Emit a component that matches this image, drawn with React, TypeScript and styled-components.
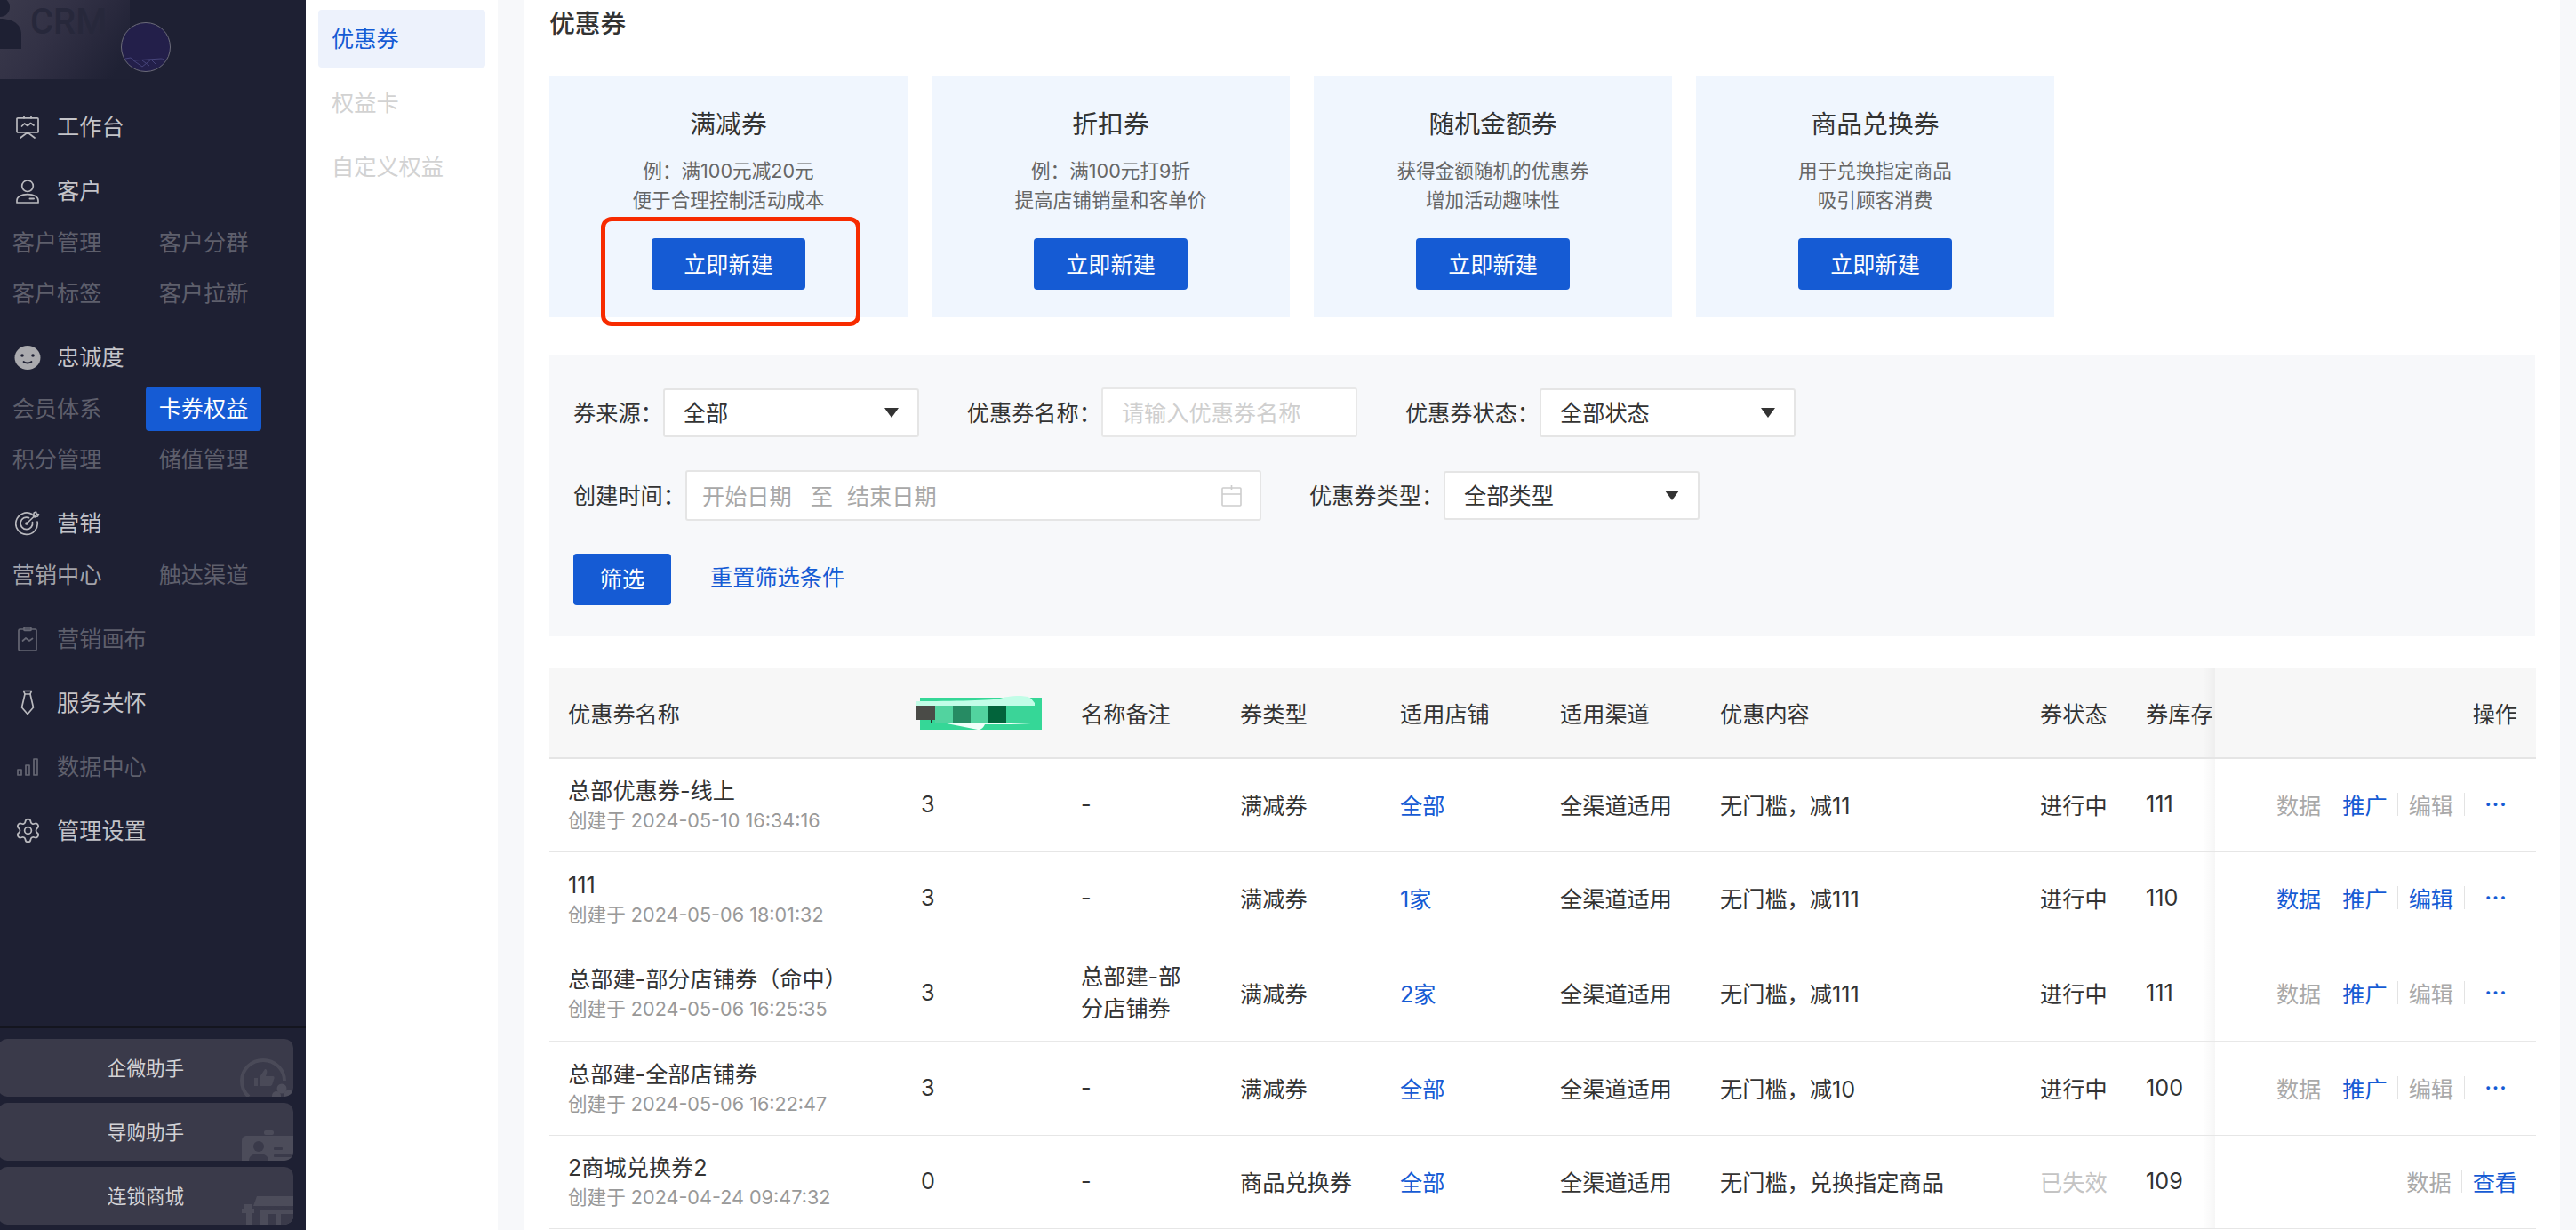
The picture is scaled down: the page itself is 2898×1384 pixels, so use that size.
import React from "react";
import styled, { createGlobalStyle } from "styled-components";
import { Settings } from "lucide-react";

const BLUE = "#155bd4";
const SIDE = "#1e2033";

const Global = createGlobalStyle`
  html, body { margin: 0; padding: 0; height: 100%; background: #f7f8fa; }
  #root { height: 100%; }
  * { box-sizing: border-box; }
  body { font-family: "Inter", "Noto Sans CJK SC", sans-serif; color: #333; }
`;

const Page = styled.div`
  display: flex;
  height: 1384px;
  overflow: hidden;
  background: #f7f8fa;
`;

/* ---------- dark sidebar ---------- */
const Sidebar = styled.aside`
  width: 344px;
  flex: none;
  height: 100%;
  background: ${SIDE};
  display: flex;
  flex-direction: column;
`;
const LogoBar = styled.div`
  position: relative;
  height: 89px;
  margin-bottom: 18px;
`;
const LogoBlock = styled.div`
  width: 146px;
  height: 89px;
  background: linear-gradient(125deg, #3b3a4c 0%, #323145 40%, #29293d 65%, #1f2134 90%);
  display: flex;
  align-items: flex-start;
  gap: 10px;
  overflow: hidden;
`;
const LogoWord = styled.span`
  font-family: "Roboto", sans-serif;
  font-size: 40px;
  line-height: 50px;
  font-weight: 500;
  color: #27283b;
`;
const Avatar = styled.svg`
  position: absolute;
  left: 136px;
  top: 25px;
`;
const Menu = styled.nav`
  display: flex;
  flex-direction: column;
`;
const MainRow = styled.div<{ $dim?: boolean }>`
  height: 72px;
  display: flex;
  align-items: center;
  font-size: 25.2px;
  color: ${(p) => (p.$dim ? "#5e5f6c" : "#c4c4c9")};
`;
const MainLabel = styled.span`
  margin-top: -4px;
`;
const IconSlot = styled.span<{ $dim?: boolean }>`
  width: 64px;
  flex: none;
  display: flex;
  justify-content: center;
  padding-right: 2px;
  color: ${(p) => (p.$dim ? "#666774" : "#b9b9be")};
`;
const SubGrid = styled.div`
  display: grid;
  grid-template-columns: 130px 130px;
  column-gap: 35px;
  margin: -7px 0 7px -1px;
`;
const SubItem = styled.div<{ $active?: boolean; $bright?: boolean }>`
  height: 57.5px;
  padding-bottom: 4px;
  display: flex;
  align-items: center;
  justify-content: center;
  font-size: 25.2px;
  color: ${(p) => (p.$bright ? "#a3a3aa" : "#5e5f6c")};
  ${(p) =>
    p.$active &&
    `
    color: #fff;
    position: relative;
    z-index: 0;
    &::before {
      content: "";
      position: absolute;
      left: 0; right: 0; top: 3.5px; bottom: 3.5px;
      background: ${BLUE};
      border-radius: 4px;
      z-index: -1;
    }
  `}
`;
const Footer = styled.div`
  margin-top: auto;
  border-top: 2px solid #14151f;
  padding: 12px 0 6px;
  display: flex;
  flex-direction: column;
  gap: 7px;
`;
const HelperButton = styled.div`
  position: relative;
  overflow: hidden;
  width: 332px;
  height: 65px;
  margin-left: -2px;
  padding-bottom: 2px;
  border-radius: 10px;
  background: #3a3a4a;
  color: #d2d2d6;
  font-size: 21.6px;
  display: flex;
  align-items: center;
  justify-content: center;
`;
const HelperArt = styled.svg`
  position: absolute;
  right: 0;
  bottom: 0;
`;

/* ---------- secondary nav ---------- */
const SubNav = styled.div`
  width: 216px;
  flex: none;
  background: #fff;
  padding: 11px 14px 0;
  display: flex;
  flex-direction: column;
  gap: 7px;
`;
const SubNavItem = styled.div<{ $active?: boolean }>`
  height: 65px;
  padding: 0 0 3px 15px;
  display: flex;
  align-items: center;
  font-size: 25.2px;
  border-radius: 4px;
  color: ${(p) => (p.$active ? BLUE : "#d2d2d2")};
  background: ${(p) => (p.$active ? "#edf2fc" : "transparent")};
`;

/* ---------- content ---------- */
const Content = styled.main`
  width: 2291px;
  margin-left: 29px;
  flex: none;
  background: #fff;
  padding: 0 28px 0 29px;
`;
const Title = styled.h1`
  margin: 0 0 35px;
  height: 50px;
  line-height: 54px;
  font-size: 28.8px;
  font-weight: 500;
  color: #333;
`;
const Cards = styled.div`
  display: flex;
  gap: 27px;
`;
const Card = styled.div`
  position: relative;
  width: 403px;
  height: 272px;
  background: #f0f6fe;
  padding-top: 35px;
  display: flex;
  flex-direction: column;
  align-items: center;
`;
const CardTitle = styled.div`
  font-size: 28.8px;
  line-height: 40px;
  color: #333;
`;
const CardDesc = styled.div`
  margin-top: 16px;
  font-size: 21.6px;
  line-height: 33px;
  color: #666;
  text-align: center;
`;
const PrimaryButton = styled.button<{ $w: number }>`
  width: ${(p) => p.$w}px;
  height: 58px;
  border: 0;
  border-radius: 4px;
  background: ${BLUE};
  color: #fff;
  font: inherit;
  font-size: 25.2px;
  padding: 0 0 3px;
`;
const CardAction = styled.div`
  margin-top: 26px;
`;
const Highlight = styled.div`
  position: absolute;
  left: 58px;
  top: 159px;
  width: 292px;
  height: 123px;
  border: 5px solid #f72b00;
  border-radius: 12px;
`;
const Filter = styled.section`
  margin-top: 42px;
  height: 317px;
  background: #f7f8fa;
  padding: 37px 27px 0;
  display: flex;
  flex-direction: column;
  gap: 37px;
`;
const FilterRow = styled.div`
  display: flex;
  align-items: center;
  gap: 54px;
  height: 56px;
`;
const Field = styled.div`
  display: flex;
  align-items: center;
`;
const Label = styled.span`
  font-size: 25.2px;
  color: #333;
  white-space: nowrap;
  margin-top: -3px;
`;
const SelectBox = styled.div<{ $w: number }>`
  width: ${(p) => p.$w}px;
  height: 55px;
  background: #fff;
  border: 2px solid #e5e5e5;
  border-radius: 3px;
  padding: 0 21px 3px 21px;
  display: flex;
  align-items: center;
  justify-content: space-between;
  font-size: 25.2px;
  color: #333;
`;
const Caret = styled.i`
  width: 0;
  height: 0;
  margin-top: 3px;
  border-left: 8px solid transparent;
  border-right: 8px solid transparent;
  border-top: 11px solid #333;
`;
const TextInput = styled.div`
  width: 288px;
  height: 56px;
  background: #fff;
  border: 2px solid #e8e8e8;
  border-radius: 3px;
  padding: 0 0 2px 21px;
  display: flex;
  align-items: center;
  font-size: 25.2px;
  color: #cfcfcf;
`;
const DateBox = styled.div`
  width: 648px;
  height: 57px;
  background: #fff;
  border: 2px solid #e5e5e5;
  border-radius: 3px;
  padding: 0 20px 0 17px;
  display: flex;
  align-items: center;
  font-size: 25.2px;
  color: #a8a8a8;
`;
const DateTo = styled.span`
  margin: 0 16px 0 21px;
`;
const CalIcon = styled.svg`
  margin-left: auto;
`;
const ActionsRow = styled.div`
  display: flex;
  align-items: center;
  height: 57px;
  margin-top: 1px;
  gap: 44px;
`;
const ResetLink = styled.a`
  font-size: 25.2px;
  color: ${BLUE};
  margin-top: -7px;
`;

const Table = styled.table`
  margin-top: 35.5px;
  width: 2235px;
  table-layout: fixed;
  border-collapse: separate;
  border-spacing: 0;
  font-size: 25.2px;
  color: #333;
`;
const HeadCell = styled.th<{ $right?: boolean }>`
  height: 102.5px;
  background: #f7f7f7;
  border-bottom: 2px solid #e5e5e5;
  font-weight: 400;
  padding: 0 ${(p) => (p.$right ? "21px" : "0")} 0 ${(p) => (p.$right ? "0" : "21px")};
  text-align: ${(p) => (p.$right ? "right" : "left")};
  position: relative;
  white-space: nowrap;
`;
const Row = styled.tr<{ $h: number }>`
  height: ${(p) => p.$h}px;
`;
const Cell = styled.td<{ $thick?: boolean }>`
  border-bottom: ${(p) => (p.$thick ? "2px solid #e8e8e8" : "1px solid #e6e6e6")};
  padding: 0 0 3px 21px;
  vertical-align: middle;
`;
const NameCell = styled(Cell)`
  padding: 3px 0 0 21px;
`;
const FixedCell = styled(Cell)`
  padding: 0 21px 3px 0;
  position: relative;
`;
const FixedShadow = styled.span`
  position: absolute;
  left: -14px;
  top: 0;
  bottom: 0;
  width: 14px;
  background: linear-gradient(to left, rgba(0, 0, 0, 0.035), rgba(0, 0, 0, 0));
  pointer-events: none;
`;
const NameTitle = styled.div`
  line-height: 32px;
`;
const NameSub = styled.div`
  line-height: 35px;
  font-size: 21.6px;
  color: #999;
`;
const Note = styled.div`
  max-width: 120px;
  line-height: 36px;
`;
const Link = styled.span`
  color: ${BLUE};
`;
const Expired = styled.span`
  color: #c4c4c4;
`;
const ActionList = styled.div`
  display: flex;
  justify-content: flex-end;
  align-items: center;
`;
const Action = styled.span<{ $on?: boolean }>`
  color: ${(p) => (p.$on ? BLUE : "#a9a9a9")};
  white-space: nowrap;
`;
const Sep = styled.i`
  width: 1px;
  height: 26px;
  margin: 0 11.5px;
  background: #e3e3e3;
`;
const More = styled.span`
  width: 48px;
  text-align: center;
  color: ${BLUE};
  font-weight: 700;
  font-size: 22px;
  line-height: 26px;
  letter-spacing: 1px;
`;

/* ---------- drawings ---------- */
const Line = { fill: "none", stroke: "currentColor", strokeWidth: 1.7, strokeLinecap: "round", strokeLinejoin: "round" } as const;

const MonitorIcon = () => (
  <svg width="26" height="26" viewBox="0 0 26 26" {...Line}>
    <path d="M9 .8v2M17 .8v2" />
    <rect x="1" y="2.8" width="24" height="16.2" rx="1" />
    <path d="M6.5 12l3-3 3.5 2.5 3.5-3 3.5 2.5" />
    <path d="M13 19l-8 6M13 19l8 6" />
  </svg>
);
const PersonIcon = () => (
  <svg width="26" height="27" viewBox="0 0 26 27" {...Line}>
    <circle cx="13" cy="7.2" r="6.3" />
    <path d="M1 26v-2.5c0-4 5-6.8 12-6.8s12 2.8 12 6.8V26z" />
    <path d="M15.5 21.6h4.5" strokeWidth="2" />
  </svg>
);
const SmileIcon = () => (
  <svg width="30" height="27" viewBox="0 0 30 27">
    <ellipse cx="15" cy="13.5" rx="14.5" ry="13.5" fill="#aaaaae" />
    <circle cx="9" cy="11" r="1.8" fill={SIDE} />
    <circle cx="21" cy="11" r="1.8" fill={SIDE} />
    <path d="M10.5 18c2.5 2 6.5 2 9 0" fill="none" stroke={SIDE} strokeWidth="1.8" strokeLinecap="round" />
  </svg>
);
const TargetIcon = () => (
  <svg width="28" height="28" viewBox="0 0 28 28" {...Line}>
    <path d="M19 3.6A12.2 12.2 0 1 0 25 12" />
    <path d="M15.5 7.6A6.8 6.8 0 1 0 19.5 12.5" />
    <circle cx="13" cy="14" r="1" fill="currentColor" />
    <path d="M13 14L22.5 5" />
    <path d="M20.5 5.5l.8-3.5 2.2-1 .6 2.2 2.4.6-1.2 2.2-3.3.8z" />
  </svg>
);
const ClipIcon = () => (
  <svg width="22" height="28" viewBox="0 0 22 28" {...Line}>
    <rect x="1" y="3" width="20" height="24" rx="1.5" />
    <rect x="7" y="1" width="8" height="3.5" rx="1" />
    <path d="M5.5 16l3.5-3 4 3 3.5-2.5" />
  </svg>
);
const TieIcon = () => (
  <svg width="16" height="29" viewBox="0 0 16 29" {...Line}>
    <path d="M3.5 1.5h9l-1.5 3.5H5z" />
    <path d="M5 5L1.5 20 8 27.5 14.5 20 11 5" />
  </svg>
);
const BarsIcon = () => (
  <svg width="24" height="20" viewBox="0 0 24 20" {...Line}>
    <rect x="1" y="13" width="4" height="6" />
    <rect x="10" y="8" width="4" height="11" />
    <rect x="19" y="1" width="4" height="18" />
  </svg>
);
const GearIcon = () => <Settings size={31} strokeWidth={1.35} />;

const ChatArt = () => (
  <HelperArt width="60" height="45" viewBox="0 0 60 45">
    <path d="M10 45c-6-5-8-12-8-18C2 14 13 4 26 4s24 10 24 23" fill="none" stroke="#4a4a58" strokeWidth="4" />
    <path d="M16 33v-9h4v9zM22 33V23l6-9c2 0 3 2 2 5l-1 3h8c2 0 2 2 1 4l-2 6c-1 1-2 1-3 1z" fill="#4a4a58" />
    <circle cx="47" cy="36" r="5.5" fill="#4e4e5c" />
    <circle cx="55" cy="43" r="5.5" fill="#4e4e5c" />
    <circle cx="41" cy="44" r="5" fill="#4e4e5c" />
  </HelperArt>
);
const BadgeArt = () => (
  <HelperArt width="58" height="34" viewBox="0 0 58 34">
    <rect x="25" y="0" width="11" height="5" rx="2" fill="#4c4c5a" />
    <path d="M6 6h52v28H0V12c0-4 2-6 6-6z" fill="#4c4c5a" />
    <circle cx="19" cy="18" r="6" fill="#3a3a4a" />
    <path d="M8 34c0-5 4-8 11-8s11 3 11 8z" fill="#3a3a4a" />
    <rect x="36" y="19" width="10" height="3" rx="1" fill="#3a3a4a" />
    <rect x="36" y="27" width="20" height="3" rx="1" fill="#3a3a4a" />
  </HelperArt>
);
const StoreArt = () => (
  <HelperArt width="58" height="32" viewBox="0 0 58 32">
    <path d="M17 0h41v11H13z" fill="#4c4c5a" />
    <path d="M14 11c3 3 6 3 8 0 2 3 6 3 8 0 2 3 6 3 8 0 2 3 6 3 8 0 2 3 6 3 12 0v3c-6 2-10 2-12 1-2 1-6 1-8 0-2 1-6 1-8 0-2 1-6 1-8 0-2 1-6 1-8-1z" fill="#3a3a4a" />
    <path d="M20 16h38v16H20z" fill="#4c4c5a" />
    <path d="M29 20h10v12H29zM44 20h14v12H44z" fill="#3a3a4a" />
    <path d="M3 9h8v5h3v5H11v13H5V19H0v-5h3z" fill="#4c4c5a" />
  </HelperArt>
);
const GreenMask = () => (
  <svg width="144" height="40" viewBox="0 0 144 40" style={{ display: "block", marginLeft: "-6px" }}>
    <rect x="5" y="3" width="137" height="36" fill="#35d797" />
    <path d="M0 7c40 0 90-1 95-3 8-3 30-5 35 0l4 5v3H0z" fill="#c2fde7" />
    <rect x="0" y="12" width="22" height="16" fill="#4a4b47" />
    <rect x="22" y="12" width="20" height="20" fill="#52d39f" />
    <rect x="42" y="12" width="20" height="20" fill="#268b63" />
    <rect x="62" y="12" width="20" height="20" fill="#52d39f" />
    <rect x="82" y="12" width="20" height="20" fill="#02643b" />
    <rect x="102" y="12" width="27" height="20" fill="#3bd498" />
    <path d="M35 32l35 7c4 0 6-2 8-6 20 0 40 0 52-1z" fill="#effff9" />
    <rect x="17" y="28" width="2" height="4" fill="#26302c" />
  </svg>
);

/* ---------- data ---------- */
const cards = [
  { t: "满减券", a: "例：满100元减20元", b: "便于合理控制活动成本", mark: true },
  { t: "折扣券", a: "例：满100元打9折", b: "提高店铺销量和客单价" },
  { t: "随机金额券", a: "获得金额随机的优惠券", b: "增加活动趣味性" },
  { t: "商品兑换券", a: "用于兑换指定商品", b: "吸引顾客消费" },
];

type Act = { label: string; on?: boolean };
const rows: {
  name: string; sub: string; count: string; note: string; type: string; shop: string; content: string;
  status: string; expired?: boolean; stock: string; h: number; thick?: boolean; acts: Act[]; more?: boolean;
}[] = [
  { name: "总部优惠券-线上", sub: "创建于 2024-05-10 16:34:16", count: "3", note: "-", type: "满减券", shop: "全部", content: "无门槛，减11", status: "进行中", stock: "111", h: 105,
    acts: [{ label: "数据" }, { label: "推广", on: true }, { label: "编辑" }], more: true },
  { name: "111", sub: "创建于 2024-05-06 18:01:32", count: "3", note: "-", type: "满减券", shop: "1家", content: "无门槛，减111", status: "进行中", stock: "110", h: 106,
    acts: [{ label: "数据", on: true }, { label: "推广", on: true }, { label: "编辑", on: true }], more: true },
  { name: "总部建-部分店铺券（命中）", sub: "创建于 2024-05-06 16:25:35", count: "3", note: "总部建-部分店铺券", type: "满减券", shop: "2家", content: "无门槛，减111", status: "进行中", stock: "111", h: 108, thick: true,
    acts: [{ label: "数据" }, { label: "推广", on: true }, { label: "编辑" }], more: true },
  { name: "总部建-全部店铺券", sub: "创建于 2024-05-06 16:22:47", count: "3", note: "-", type: "满减券", shop: "全部", content: "无门槛，减10", status: "进行中", stock: "100", h: 105,
    acts: [{ label: "数据" }, { label: "推广", on: true }, { label: "编辑" }], more: true },
  { name: "2商城兑换券2", sub: "创建于 2024-04-24 09:47:32", count: "0", note: "-", type: "商品兑换券", shop: "全部", content: "无门槛，兑换指定商品", status: "已失效", expired: true, stock: "109", h: 105,
    acts: [{ label: "数据" }, { label: "查看", on: true }] },
];
const colWidths = [397, 180, 179, 180, 180, 180, 360, 119, 99, 361];

export default function App() {
  return (
    <Page>
      <Global />
      <Sidebar>
        <LogoBar>
          <LogoBlock>
            <svg width="24" height="56" viewBox="0 0 24 56">
              <circle cx="0" cy="8" r="11" fill={SIDE} />
              <path d="M0 21c14 0 24 6 24 18v16H0z" fill={SIDE} />
            </svg>
            <LogoWord>CRM</LogoWord>
          </LogoBlock>
          <Avatar width="56" height="56" viewBox="0 0 56 56">
            <circle cx="28" cy="28" r="27.5" fill="#231f4a" stroke="#6c6c79" strokeWidth="1" />
            <path d="M5 41l6-1 4 3 30-2c2 0 4 1 5 2M14 43l10 7 10-8 6 6M24 43l8 6" fill="none" stroke="#46447a" strokeWidth="1" />
          </Avatar>
        </LogoBar>
        <Menu>
          <MainRow><IconSlot><MonitorIcon /></IconSlot><MainLabel>工作台</MainLabel></MainRow>
          <MainRow><IconSlot><PersonIcon /></IconSlot><MainLabel>客户</MainLabel></MainRow>
          <SubGrid>
            <SubItem>客户管理</SubItem><SubItem>客户分群</SubItem>
            <SubItem>客户标签</SubItem><SubItem>客户拉新</SubItem>
          </SubGrid>
          <MainRow><IconSlot><SmileIcon /></IconSlot><MainLabel>忠诚度</MainLabel></MainRow>
          <SubGrid>
            <SubItem>会员体系</SubItem><SubItem $active>卡券权益</SubItem>
            <SubItem>积分管理</SubItem><SubItem>储值管理</SubItem>
          </SubGrid>
          <MainRow><IconSlot><TargetIcon /></IconSlot><MainLabel>营销</MainLabel></MainRow>
          <SubGrid>
            <SubItem $bright>营销中心</SubItem><SubItem>触达渠道</SubItem>
          </SubGrid>
          <MainRow $dim><IconSlot $dim><ClipIcon /></IconSlot><MainLabel>营销画布</MainLabel></MainRow>
          <MainRow><IconSlot><TieIcon /></IconSlot><MainLabel>服务关怀</MainLabel></MainRow>
          <MainRow $dim><IconSlot $dim><BarsIcon /></IconSlot><MainLabel>数据中心</MainLabel></MainRow>
          <MainRow><IconSlot><GearIcon /></IconSlot><MainLabel>管理设置</MainLabel></MainRow>
        </Menu>
        <Footer>
          <HelperButton>企微助手<ChatArt /></HelperButton>
          <HelperButton>导购助手<BadgeArt /></HelperButton>
          <HelperButton>连锁商城<StoreArt /></HelperButton>
        </Footer>
      </Sidebar>

      <SubNav>
        <SubNavItem $active>优惠券</SubNavItem>
        <SubNavItem>权益卡</SubNavItem>
        <SubNavItem>自定义权益</SubNavItem>
      </SubNav>

      <Content>
        <Title>优惠券</Title>
        <Cards>
          {cards.map((c) => (
            <Card key={c.t}>
              <CardTitle>{c.t}</CardTitle>
              <CardDesc>{c.a}<br />{c.b}</CardDesc>
              <CardAction><PrimaryButton $w={173}>立即新建</PrimaryButton></CardAction>
              {c.mark && <Highlight />}
            </Card>
          ))}
        </Cards>

        <Filter>
          <FilterRow>
            <Field><Label>券来源：</Label><SelectBox $w={288}>全部<Caret /></SelectBox></Field>
            <Field><Label>优惠券名称：</Label><TextInput>请输入优惠券名称</TextInput></Field>
            <Field><Label>优惠券状态：</Label><SelectBox $w={288}>全部状态<Caret /></SelectBox></Field>
          </FilterRow>
          <FilterRow>
            <Field>
              <Label>创建时间：</Label>
              <DateBox>
                开始日期<DateTo>至</DateTo>结束日期
                <CalIcon width="23" height="25" viewBox="0 0 23 25" fill="none" stroke="#cdcdcd" strokeWidth="1.6">
                  <rect x="1" y="4" width="21" height="20" rx="1" />
                  <path d="M1 11h21M11.5 1v5" />
                </CalIcon>
              </DateBox>
            </Field>
            <Field><Label>优惠券类型：</Label><SelectBox $w={288}>全部类型<Caret /></SelectBox></Field>
          </FilterRow>
          <ActionsRow>
            <PrimaryButton $w={110}>筛选</PrimaryButton>
            <ResetLink>重置筛选条件</ResetLink>
          </ActionsRow>
        </Filter>

        <Table>
          <colgroup>
            {colWidths.map((w, i) => <col key={i} width={w} />)}
          </colgroup>
          <thead>
            <tr>
              <HeadCell>优惠券名称</HeadCell>
              <HeadCell><GreenMask /></HeadCell>
              <HeadCell>名称备注</HeadCell>
              <HeadCell>券类型</HeadCell>
              <HeadCell>适用店铺</HeadCell>
              <HeadCell>适用渠道</HeadCell>
              <HeadCell>优惠内容</HeadCell>
              <HeadCell>券状态</HeadCell>
              <HeadCell>券库存</HeadCell>
              <HeadCell $right><FixedShadow />操作</HeadCell>
            </tr>
          </thead>
          <tbody>
            {rows.map((r) => (
              <Row key={r.sub} $h={r.h}>
                <NameCell $thick={r.thick}>
                  <NameTitle>{r.name}</NameTitle>
                  <NameSub>{r.sub}</NameSub>
                </NameCell>
                <Cell $thick={r.thick}>{r.count}</Cell>
                <Cell $thick={r.thick}><Note>{r.note}</Note></Cell>
                <Cell $thick={r.thick}>{r.type}</Cell>
                <Cell $thick={r.thick}><Link>{r.shop}</Link></Cell>
                <Cell $thick={r.thick}>全渠道适用</Cell>
                <Cell $thick={r.thick}>{r.content}</Cell>
                <Cell $thick={r.thick}>{r.expired ? <Expired>{r.status}</Expired> : r.status}</Cell>
                <Cell $thick={r.thick}>{r.stock}</Cell>
                <FixedCell $thick={r.thick}>
                  <FixedShadow />
                  <ActionList>
                    {r.acts.map((a, i) => (
                      <React.Fragment key={a.label}>
                        {i > 0 && <Sep />}
                        <Action $on={a.on}>{a.label}</Action>
                      </React.Fragment>
                    ))}
                    {r.more && (<><Sep /><More>···</More></>)}
                  </ActionList>
                </FixedCell>
              </Row>
            ))}
          </tbody>
        </Table>
      </Content>
    </Page>
  );
}
